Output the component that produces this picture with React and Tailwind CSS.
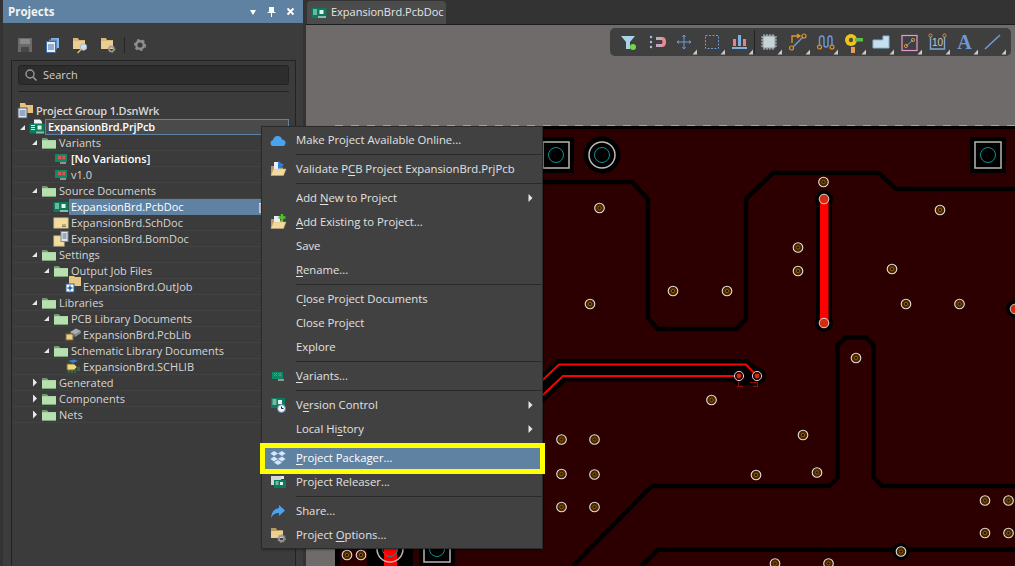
import React from "react";

const FONT = "font-['Open_Sans','Noto_Sans',sans-serif]";

const Folder = () => (
  <svg width="16" height="14" viewBox="0 0 16 14" className="block">
    <path d="M1 2.5 L6 2.5 L7 4 L15 4 L15 13 L1 13 Z" fill="#a9d6a4" />
    <path d="M1 2.5 L6 2.5 L7 4 L1 4 Z" fill="#6f9f6c" />
    <path d="M1 5 H15 V13 H1 Z" fill="#b8dfb0" />
    <path d="M1 12 H15 V13 H1 Z" fill="#79aa75" />
  </svg>
);

const Board = ({ x = 1, y = 3, s = 1 }) => (
  <g transform={`translate(${x} ${y}) scale(${s})`}>
    <rect width="15" height="10" fill="#0c7a5c" />
    <rect x="1.5" y="1.5" width="4" height="1" fill="#cfeee2" />
    <rect x="1.5" y="3.5" width="4" height="1" fill="#cfeee2" />
    <rect x="1.5" y="5.5" width="4" height="1" fill="#cfeee2" />
    <rect x="8" y="2" width="4" height="4" fill="#dff5ec" />
    <rect x="7" y="8" width="1" height="2" fill="#fff" />
    <rect x="9" y="8" width="1" height="2" fill="#fff" />
    <rect x="11" y="8" width="1" height="2" fill="#fff" />
    <rect x="13" y="8" width="1" height="2" fill="#fff" />
  </g>
);

const Svg16 = ({ children }) => (
  <svg width="16" height="16" viewBox="0 0 16 16" className="block">{children}</svg>
);

const PcbIcon = () => <Svg16><Board x={0.5} y={3} /></Svg16>;

const VariantIcon = () => (
  <Svg16>
    <rect x="2" y="3" width="12" height="8" fill="#0c8a66" />
    <path d="M5 5 L8 8 M8 5 L5 8 M9.5 5 L12 8 M12 5 L9.5 8" stroke="#e85a5a" strokeWidth="1.2" />
    <path d="M8 11 V13 M10 11 V13 M12 11 V13" stroke="#dfeee8" strokeWidth="1" />
  </Svg16>
);

const PrjIcon = () => (
  <Svg16>
    <path d="M5 0.5 H11 L13 2.5 V6 H5 Z" fill="#f1f1f1" />
    <Board x={0.5} y={4.5} />
  </Svg16>
);

const SchIcon = () => (
  <Svg16>
    <rect x="1" y="3" width="14" height="10" fill="#f3dc9a" stroke="#d8c9a0" />
    <path d="M9 10 H13 M9 11.5 H13" stroke="#8a7a50" />
  </Svg16>
);

const BomIcon = () => (
  <Svg16>
    <rect x="1" y="5" width="10" height="10" fill="#f3dc9a" stroke="#d8c9a0" />
    <rect x="8" y="0.5" width="7" height="10" fill="#dfe6f2" stroke="#7b8798" />
    <path d="M9.5 3 H13.5 M9.5 5 H13.5 M9.5 7 H13.5" stroke="#5f6b80" />
  </Svg16>
);

const OutJobIcon = () => (
  <svg width="18" height="16" viewBox="0 0 18 16" className="block overflow-visible">
    <path d="M4 -3 H9 L10 -2 H16 V7 H4 Z" fill="#e7c684" />
    <rect x="1" y="5" width="8" height="8" fill="#fff" stroke="#2c5f9e" />
    <path d="M5 6.5 V11.5 M2.5 9 H7.5" stroke="#1a58a8" strokeWidth="1.4" />
  </svg>
);

const PcbLibIcon = () => (
  <Svg16>
    <path d="M5 5 L11 1.5 L16 4 L10 8 Z" fill="#a9adb3" />
    <path d="M5 5 L10 8 L10 10 L5 7 Z" fill="#6b6f75" />
    <path d="M10 8 L16 4 L16 6 L10 10 Z" fill="#8a8e94" />
    <rect x="1" y="7" width="7" height="6" fill="#eccf86" stroke="#7d6a3a" />
  </Svg16>
);

const SchLibIcon = () => (
  <Svg16>
    <path d="M3 2 L9 0.5 L13 2 L8 4 Z" fill="#3a7fd0" />
    <path d="M2 5 H9 L12 8 L9 11 H2 Z" fill="#efd77e" stroke="#7d6a2a" />
    <path d="M4 11 V14 M7 11 V14 M10 10 V14 M12 9 H15 M12 11 H15" stroke="#3f8f4a" />
  </Svg16>
);

const Arrow = ({ open }) =>
  open ? (
    <svg width="7" height="7" viewBox="0 0 7 7" className="block"><path d="M6 1 V6 H1 Z" fill="#e8e8e8" /></svg>
  ) : (
    <svg width="7" height="9" viewBox="0 0 7 9" className="block"><path d="M2 0.5 L6 4.5 L2 8.5 Z" fill="#e8e8e8" /></svg>
  );

const PAD = ["pl-[5px]", "pl-[17px]", "pl-[29px]", "pl-[41px]"];

const Row = ({ level, arrow, icon, label, bold, selected, focused, tail, noLine }) => (
  <div className={`flex h-4 items-center ${PAD[level]} ${noLine ? "" : "border-b border-[#424242]"}`}>
    <span className="flex w-[12px] justify-center pr-[1px]">{arrow ? <Arrow open={arrow === "open"} /> : null}</span>
    <span className="flex w-[16px] justify-start">{icon}</span>
    <span
      className={`mr-[6px] flex h-4 flex-1 items-center pl-[2px] whitespace-nowrap ${bold ? "font-semibold text-white" : "text-[#d6d6d6]"} ${selected ? "bg-[#5f82a3] text-white" : ""} ${focused ? "border border-[#5f82a3] bg-[#4a4a4a] pl-[1px] tracking-[-0.16px]" : ""}`}
    >
      {label}
      {tail ? <span className="ml-auto pr-[17px]">{tail}</span> : null}
    </span>
  </div>
);

const Tree = () => (
  <div className="mt-[11px] text-[11px] leading-4">
    <div className="flex h-4 items-center pl-[5px]">
      <span className="flex w-[19px] justify-start">
        <svg width="17" height="16" viewBox="0 0 17 16" className="block overflow-visible">
          <path d="M3 0 H8 L9 2 H16 V10 H3 Z" fill="#e7c27a" />
          <rect x="1" y="5" width="9" height="10" fill="#dfe6f2" stroke="#4f5b70" />
          <path d="M2.5 8 H8.5 M2.5 10 H8.5 M2.5 12 H8.5" stroke="#4a6a9a" />
        </svg>
      </span>
      <span className="font-semibold tracking-[-0.2px] text-[#d8d8d8]">Project Group 1.DsnWrk</span>
    </div>
    <Row level={0} arrow="open" icon={<PrjIcon />} label="ExpansionBrd.PrjPcb" bold focused noLine />
    <Row level={1} arrow="open" icon={<Folder />} label="Variants" />
    <Row level={2} icon={<VariantIcon />} label="[No Variations]" bold />
    <Row level={2} icon={<VariantIcon />} label="v1.0" />
    <Row level={1} arrow="open" icon={<Folder />} label="Source Documents" />
    <Row level={2} icon={<PcbIcon />} label="ExpansionBrd.PcbDoc" selected tail="[1]" />
    <Row level={2} icon={<SchIcon />} label="ExpansionBrd.SchDoc" />
    <Row level={2} icon={<BomIcon />} label="ExpansionBrd.BomDoc" />
    <Row level={1} arrow="open" icon={<Folder />} label="Settings" />
    <Row level={2} arrow="open" icon={<Folder />} label="Output Job Files" />
    <Row level={3} icon={<OutJobIcon />} label="ExpansionBrd.OutJob" />
    <Row level={1} arrow="open" icon={<Folder />} label="Libraries" />
    <Row level={2} arrow="open" icon={<Folder />} label="PCB Library Documents" />
    <Row level={3} icon={<PcbLibIcon />} label="ExpansionBrd.PcbLib" />
    <Row level={2} arrow="open" icon={<Folder />} label="Schematic Library Documents" />
    <Row level={3} icon={<SchLibIcon />} label="ExpansionBrd.SCHLIB" />
    <Row level={1} arrow="closed" icon={<Folder />} label="Generated" />
    <Row level={1} arrow="closed" icon={<Folder />} label="Components" />
    <Row level={1} arrow="closed" icon={<Folder />} label="Nets" />
  </div>
);

const Gear = ({ x, y, r, c = "#8a8a8a" }) => (
  <g>
    <circle cx={x} cy={y} r={r} fill="none" stroke={c} strokeWidth={r * 0.62} />
    <circle cx={x} cy={y} r={r * 1.4} fill="none" stroke={c} strokeWidth={r * 0.4} strokeDasharray={`${r * 0.7} ${r * 0.7}`} />
  </g>
);

const PanelTools = () => (
  <div className="flex h-[37px] items-center pl-[6px] pt-[7px]">
    <svg width="16" height="16" viewBox="0 0 16 16" className="block">
      <path d="M1 1 H15 V15 H1 Z" fill="#6a6a6a" />
      <rect x="3" y="2" width="10" height="5" fill="#8a8a8a" />
      <rect x="4" y="10" width="8" height="5" fill="#474747" />
    </svg>
    <svg width="16" height="16" viewBox="0 0 16 16" className="ml-[12px] block">
      <rect x="6" y="1" width="8" height="10" fill="#8db4dc" />
      <rect x="4" y="2.5" width="8" height="10" fill="#5b8ec4" />
      <rect x="1.5" y="4.5" width="9" height="11" fill="#e8eef6" stroke="#3f6ea6" />
      <path d="M3 8 H9 M3 10 H9 M3 12 H9" stroke="#3f6ea6" />
    </svg>
    <svg width="17" height="17" viewBox="0 0 17 17" className="ml-[11px] block">
      <path d="M1 1 H6 L7 3 H13 V12 H1 Z" fill="#d8b878" />
      <path d="M1 4 H13 V12 H1 Z" fill="#eccf90" />
      <circle cx="11.5" cy="10" r="3.2" fill="#cfdff0" stroke="#a8b8c8" />
      <path d="M9 12.5 L5.5 16" stroke="#d8b878" strokeWidth="1.6" />
    </svg>
    <svg width="17" height="17" viewBox="0 0 17 17" className="ml-[11px] block">
      <path d="M1 1 H6 L7 3 H13 V12 H1 Z" fill="#d8b878" />
      <path d="M1 4 H13 V12 H1 Z" fill="#eccf90" />
      <Gear x={11.5} y={12} r={2.4} c="#9a9a9a" />
    </svg>
    <span className="ml-[7px] h-[16px] w-px bg-[#262626]" />
    <svg width="16" height="16" viewBox="0 0 16 16" className="ml-[7px] block">
      <Gear x={8} y={8} r={3.8} c="#8f8f8f" />
    </svg>
  </div>
);

const LeftPanel = () => (
  <div className="flex h-full w-[306px] flex-col bg-[#333333] px-[3px]">
    <div className="flex h-[23px] items-center bg-[#5f82a3] pl-[5px] pr-[8px] text-[11.5px] font-bold text-[#f2f2f2]">
      <span>Projects</span>
      <svg width="8" height="8" viewBox="0 0 8 8" className="ml-auto block"><path d="M1 2 H7 L4 7 Z" fill="#fff" /></svg>
      <svg width="9" height="11" viewBox="0 0 9 11" className="ml-[10px] block"><path d="M2 1 H7 V6 H8.5 V7 H5 V11 H4 V7 H0.5 V6 H2 Z" fill="#fff" /></svg>
      <svg width="9" height="9" viewBox="0 0 9 9" className="ml-[10px] block"><path d="M1.5 1.5 L7.5 7.5 M7.5 1.5 L1.5 7.5" stroke="#fff" strokeWidth="1.8" /></svg>
    </div>
    <div className="flex min-h-0 flex-1 flex-col bg-[#3c3c3c] pl-[8px] pr-[7px]">
      <PanelTools />
      <div className="flex-1 border-x border-t border-[#232323] bg-[#3b3b3b]">
        <div className="mx-[6px] mt-[4px] flex h-[20px] items-center rounded-[3px] border border-[#232323] bg-[#2d2d2d] pl-[5px] text-[11px] text-[#cfcfcf]">
          <svg width="14" height="14" viewBox="0 0 14 14" className="block">
            <circle cx="6" cy="6" r="4" fill="none" stroke="#9a9a9a" strokeWidth="1.4" />
            <path d="M9 9 L12.5 12.5" stroke="#9a9a9a" strokeWidth="1.6" />
          </svg>
          <span className="ml-[5px]">Search</span>
        </div>
        <div className="mx-[6px] mt-[6px] border-t border-[#232323]" />
        <Tree />
      </div>
    </div>
  </div>
);

const Corner = () => <path d="M22.5 26.5 L27 26.5 L27 21.5 Z" fill="#c9c9c9" />;

const Tool = ({ children, corner = true }) => (
  <svg width="28" height="28" viewBox="0 0 28 28" className="block flex-none">
    {children}
    {corner ? <Corner /> : null}
  </svg>
);

const TopTools = () => (
  <div className="absolute left-[304px] top-[3px] flex h-[28px] w-[401px] items-center rounded-[5px] bg-[#3f3f3f] pl-[4px]">
    <Tool corner={false}>
      <path d="M7 8 H21 L16 14 V21 H12 V14 Z" fill="#a9d3e6" />
      <circle cx="19" cy="19" r="3" fill="#72d944" />
    </Tool>
    <Tool corner={false}>
      <path d="M14 9 H20 Q24 9 24 14 Q24 19 20 19 H14 V16 H20 Q21 14 20 12 H14 Z" fill="#e88a92" />
      <path d="M14 12 H20 V9 H14 Z M14 19 H20 V16 H14 Z" fill="#9fc2e8" opacity="0.5" />
      <circle cx="9" cy="9" r="1.2" fill="#9fc2e8" />
      <circle cx="9" cy="14" r="1.2" fill="#9fc2e8" />
      <circle cx="9" cy="19" r="1.2" fill="#9fc2e8" />
    </Tool>
    <Tool>
      <path d="M14 7 V21 M7 14 H21 M14 7 L12.5 9 M14 7 L15.5 9 M14 21 L12.5 19 M14 21 L15.5 19 M7 14 L9 12.5 M7 14 L9 15.5 M21 14 L19 12.5 M21 14 L19 15.5" stroke="#6f9ad6" fill="none" />
    </Tool>
    <Tool>
      <rect x="7.5" y="7.5" width="13" height="13" fill="none" stroke="#6f9ad6" strokeDasharray="2 1.5" />
    </Tool>
    <Tool>
      <rect x="7" y="11" width="3" height="7" fill="#e8808a" />
      <rect x="12" y="7" width="3" height="11" fill="#7fb0e0" />
      <rect x="17" y="11" width="3" height="7" fill="#e8808a" />
      <rect x="6" y="19" width="15" height="2" fill="#7fb0e0" />
    </Tool>
    <span className="h-[24px] w-0 border-l border-[#222222]" />
    <Tool>
      <rect x="8" y="8" width="12" height="12" rx="1" fill="#c6d2d6" stroke="#90a0a8" />
      <path d="M9 6 V8 M12 6 V8 M15 6 V8 M18 6 V8 M9 20 V22 M12 20 V22 M15 20 V22 M18 20 V22 M6 9 H8 M6 12 H8 M6 15 H8 M6 18 H8 M20 9 H22 M20 12 H22 M20 15 H22 M20 18 H22" stroke="#b8c6ca" />
    </Tool>
    <Tool>
      <path d="M9 15 V8 H16 M14 6 L17 8 L14 10" fill="none" stroke="#e09a2a" strokeWidth="1.3" />
      <path d="M10 19 L20 9" stroke="#6f9ad6" strokeWidth="1.5" />
      <circle cx="8.5" cy="20" r="2" fill="none" stroke="#d8962a" strokeWidth="1.2" />
      <circle cx="21" cy="8" r="2" fill="none" stroke="#d8962a" strokeWidth="1.2" />
    </Tool>
    <Tool>
      <path d="M8.5 18 V11 Q8.5 8 11 8 Q13 8 13 11 V17 Q13 19 15 19 Q17 19 17 17 V11 Q17 8 19 8 Q21 8 21 11 V18" fill="none" stroke="#6f9ad6" strokeWidth="1.4" />
      <circle cx="8.5" cy="19" r="2" fill="none" stroke="#d8962a" strokeWidth="1.2" />
      <circle cx="21" cy="19" r="2" fill="none" stroke="#d8962a" strokeWidth="1.2" />
    </Tool>
    <Tool>
      <rect x="12" y="19" width="4" height="6" fill="#e8a050" />
      <circle cx="12" cy="12" r="6" fill="#f0c419" />
      <circle cx="12" cy="12" r="2.2" fill="#4a4a4a" />
      <rect x="16" y="10" width="8" height="3.5" fill="#58c04a" />
    </Tool>
    <Tool>
      <path d="M6 12 H16 V8 H22 V20 H6 Z" fill="#c6e0f0" stroke="#8fb6d2" />
    </Tool>
    <Tool>
      <rect x="7" y="7.5" width="15" height="15" fill="none" stroke="#e69ad0" strokeWidth="1.2" />
      <path d="M11 18 L18 12" stroke="#6f9ad6" />
      <circle cx="11" cy="18" r="1.6" fill="none" stroke="#d8962a" />
      <circle cx="18" cy="12" r="1.6" fill="none" stroke="#d8962a" />
    </Tool>
    <Tool>
      <path d="M7.5 9 V21 H21.5 V9" fill="none" stroke="#7fa8d0" strokeWidth="1.4" />
      <circle cx="7.5" cy="7.5" r="1.6" fill="none" stroke="#d8962a" />
      <circle cx="21.5" cy="7.5" r="1.6" fill="none" stroke="#d8962a" />
      <text x="14.5" y="18" textAnchor="middle" fontSize="10" fill="#c9c9c9" fontFamily="Liberation Sans">10</text>
    </Tool>
    <Tool>
      <text x="13.5" y="21" textAnchor="middle" fontSize="20" fontWeight="700" fill="#6f9ad6" fontFamily="Liberation Serif">A</text>
    </Tool>
    <Tool>
      <path d="M6 21 L21 7" stroke="#6f9ad6" strokeWidth="1.6" />
    </Tool>
  </div>
);

const Via = ({ x, y, halo }) => (
  <g>
    {halo ? <circle cx={x} cy={y} r="8.5" fill="#000" /> : null}
    <circle cx={x} cy={y} r="4.8" fill="#4a2600" stroke="#e4e0e0" strokeWidth="1.1" />
    <circle cx={x} cy={y} r="1.7" fill="#2a1400" stroke="#9a600c" strokeWidth="0.9" />
  </g>
);

const RedVia = ({ x, y, halo = 9 }) => (
  <g>
    {halo ? <circle cx={x} cy={y} r={halo} fill="#000" /> : null}
    <circle cx={x} cy={y} r="4.8" fill="#d42a10" stroke="#d8d4d4" strokeWidth="1" />
  </g>
);

const SquarePad = ({ x, y }) => (
  <g>
    <rect x={x - 18} y={y - 18} width="36" height="36" fill="#000" />
    <rect x={x - 13} y={y - 13} width="26" height="26" fill="#000" stroke="#b9b5b5" strokeWidth="1.5" />
    <circle cx={x} cy={y} r="7.5" fill="none" stroke="#0f8f8f" strokeWidth="1" />
  </g>
);

const vias = [
  [823.5, 182], [599.5, 208], [798, 247.5], [798, 271], [940, 210], [892, 269], [673, 291], [727, 291], [590, 304],
  [906, 304], [959.5, 304], [856, 358], [711.5, 400], [803, 435], [817, 472.5], [756, 475], [561.5, 439.5], [594.5, 439.5],
  [561.5, 474], [594.5, 474.5], [561.5, 507], [594.5, 507], [985, 500.5], [1008.5, 500.5], [985, 533], [1008.5, 533],
  [775, 563.5], [828.5, 563.5], [347, 555], [361, 555],
];

const Pcb = () => (
  <svg width="709" height="541" viewBox="306 25 709 541" className="block">
    <rect x="306" y="25" width="709" height="541" fill="#6f6b6a" />
    <path d="M335 125.5 H1015" stroke="#a8a5a4" strokeDasharray="8 8" />
    <rect x="335" y="126" width="680" height="440" fill="#000" />
    <rect x="340" y="129" width="675" height="437" fill="#2c0000" />

    <g fill="none" stroke="#000" strokeWidth="4.4">
      <path d="M520 182 H632 L648 199 V318 L658 329 H737 L746 319 V199 L773 173 H879 L896 189 H1015" />
      <path d="M651.7 486 H829 L837.5 478 V345 L846 337.5 H866 L873.5 345 V477 L882 486 H1015" />
      <path d="M651.7 486 L573 566" />
      <path d="M1015 549.5 H658.5 L641.5 566" />
    </g>

    <path d="M816 199 H832 V323 H816 Z" fill="#000" />
    <circle cx="824" cy="199" r="9" fill="#000" />
    <circle cx="824" cy="323" r="9" fill="#000" />
    <rect x="820" y="199" width="8.5" height="124" fill="#ff0000" />
    <RedVia x={824} y={199} halo={0} />
    <RedVia x={824} y={323} halo={0} />

    <circle cx="1015" cy="309" r="9" fill="#000" />
    <circle cx="1015" cy="309" r="4.8" fill="#d42a10" stroke="#cfcaca" />

    <path d="M520 396 L557 359 H747 L757 367 L757 385 H739 V381.5 H566 L520 424 Z" fill="#000" />
    <circle cx="739" cy="376" r="9" fill="#000" />
    <circle cx="757" cy="376" r="9" fill="#000" />
    <path d="M530 392 L559 364.5 H746 L757 376" fill="none" stroke="#ff0000" strokeWidth="2" />
    <path d="M530 407 L563 376 H739" fill="none" stroke="#ff0000" strokeWidth="2" />
    <circle cx="739" cy="376" r="4.6" fill="#300000" stroke="#d8d4d4" />
    <circle cx="757" cy="376" r="4.6" fill="#300000" stroke="#d8d4d4" />
    <circle cx="739" cy="376" r="2.4" fill="#d42a10" />
    <circle cx="757" cy="376" r="2.4" fill="#d42a10" />
    <path d="M738.5 381.5 V386 M737 386.5 H743 M750 382.5 H757.5 M757.5 382 V386.5 M753 386.5 H758" stroke="#8f0f0f" fill="none" />

    <SquarePad x={556} y={155} />
    <circle cx="602" cy="155" r="18.5" fill="#000" />
    <circle cx="602" cy="155" r="13" fill="none" stroke="#bdb9b9" strokeWidth="1.5" />
    <circle cx="602" cy="155" r="7.5" fill="none" stroke="#0f8f8f" />
    <SquarePad x={988} y={155} />

    <rect x="367" y="530" width="46" height="36" fill="#000" />
    <rect x="384" y="530" width="13" height="36" fill="#ff0000" />
    <circle cx="390" cy="549" r="13" fill="none" stroke="#bdb9b9" strokeWidth="1.5" />
    <circle cx="390" cy="549" r="7.5" fill="none" stroke="#0f8f8f" />
    <SquarePad x={437} y={549} />

    {vias.map(([x, y], i) => <Via key={i} x={x} y={y} />)}
    <Via x={901} y={551.5} halo />
  </svg>
);

const Sep = () => <div className="my-[2px] ml-[34px] h-px border-t border-[#2a2a2a]" />;

const U = ({ children }) => <span className="underline underline-offset-2">{children}</span>;

const Item = ({ icon, children, sub, hot }) => (
  <div className={`relative flex h-[24px] items-center ${hot ? "bg-[#5f82a3] text-white" : ""}`}>
    <span className="flex w-[34px] flex-none justify-center pr-[2px]">{icon}</span>
    <span className="whitespace-pre">{children}</span>
    {sub ? (
      <svg width="5" height="8" viewBox="0 0 5 8" className="ml-auto mr-[9px] block"><path d="M0.5 0 L4.5 4 L0.5 8 Z" fill="#e8e8e8" /></svg>
    ) : null}
    {hot ? <span className="absolute -left-[2px] -right-[3px] -top-[3px] -bottom-[4px] border-[5px] border-[#ffff00]" /> : null}
  </div>
);

const I18 = ({ children }) => <svg width="18" height="18" viewBox="0 0 18 18" className="block">{children}</svg>;

const FolderOpen = () => (
  <>
    <path d="M2 6 H7 L8 7.5 H14 V15 H2 Z" fill="#b89a60" />
    <path d="M2 15.5 L4.5 9 H17 L14.5 15.5 Z" fill="#f2d9a0" stroke="#cbb27a" strokeWidth="0.5" />
  </>
);

const ContextMenu = () => (
  <div className="absolute left-[261px] top-[126px] w-[282px] border border-[#2a2a2a] bg-[#414141] py-[1px] text-[11.3px] leading-4 text-[#e2e2e2] shadow-[1px_1px_2px_rgba(0,0,0,0.35)]">
    <Item icon={<I18><path d="M2 14 Q0.5 10 4 9 Q5 4.5 9.5 5 Q12.5 5.5 13 8.5 Q17 9 16.5 12.5 Q16 15 14 15 H4 Q2.5 15 2 14 Z" fill="#4aa3ef" /></I18>}>Make Project Available Online...</Item>
    <Sep />
    <Item icon={<I18><FolderOpen /><rect x="5" y="2" width="5" height="7" fill="#e8eef6" /><path d="M9 1 L15 5 L9 9 Z" fill="#2f80e0" /></I18>}>Validate P<U>C</U>B Project ExpansionBrd.PrjPcb</Item>
    <Sep />
    <Item sub>Add <U>N</U>ew to Project</Item>
    <Item icon={<I18><FolderOpen /><rect x="5" y="3" width="6" height="6" fill="#e8eef6" /><path d="M13 1 V8 M9.5 4.5 H16.5" stroke="#4fc22c" strokeWidth="2.4" /></I18>}><U>A</U>dd Existing to Project...</Item>
    <Item>Save</Item>
    <Item><U>R</U>ename...</Item>
    <Sep />
    <Item>C<U>l</U>ose Project Documents</Item>
    <Item>Close Project</Item>
    <Item>Explore</Item>
    <Sep />
    <Item icon={<I18><rect x="3" y="5" width="11" height="7" fill="#0c8a66" /><path d="M5 6 L8 9 M8 6 L5 9 M9.5 6 L12 9 M12 6 L9.5 9" stroke="#e85a5a" /><path d="M10 12 V14 M12 12 V14 M14 12 V14" stroke="#dfeee8" /></I18>}><U>V</U>ariants...</Item>
    <Sep />
    <Item sub icon={<I18><rect x="2" y="2" width="14" height="10" fill="#0c7a5c" /><rect x="3.5" y="3.5" width="4" height="1" fill="#dff5ec" /><rect x="3.5" y="5.5" width="4" height="1" fill="#dff5ec" /><rect x="3.5" y="7.5" width="4" height="1" fill="#dff5ec" /><rect x="9" y="4" width="4" height="4" fill="#dff5ec" /><circle cx="12.5" cy="12.5" r="4" fill="#f4f4f4" stroke="#4f7fb0" /><path d="M12.5 10.5 V12.5 H14.5" stroke="#223" fill="none" /></I18>}>V<U>e</U>rsion Control</Item>
    <Item sub>Local Hi<U>s</U>tory</Item>
    <Sep />
    <Item hot icon={<I18><g fill="#d5e6fb"><path d="M5 2 L9 4.5 L5 7 L1.5 4.5 Z" /><path d="M13 2 L16.5 4.5 L13 7 L9 4.5 Z" /><path d="M5 7.5 L9 10 L5 12.5 L1.5 10 Z" /><path d="M13 7.5 L16.5 10 L13 12.5 L9 10 Z" /><path d="M9 11 L13 13.5 L9 16 L5 13.5 Z" /></g></I18>}><U>P</U>roject Packager...</Item>
    <Item icon={<I18><path d="M2 3 H15 V6 H2 Z" fill="#e8e8e8" /><rect x="2" y="3" width="10" height="9" fill="#d6d6d6" /><rect x="5" y="7" width="12" height="8" fill="#0c7a5c" /><rect x="6.5" y="8.5" width="3" height="1" fill="#dff5ec" /><rect x="6.5" y="10.5" width="3" height="1" fill="#dff5ec" /><rect x="11" y="9" width="3" height="3" fill="#dff5ec" /></I18>}>Project Releaser...</Item>
    <Sep />
    <Item icon={<I18><path d="M10 3 L16 8.5 L10 14 V11 Q5 10.5 2 16 Q2.5 7 10 6 Z" fill="#4aa3ef" /></I18>}>Share...</Item>
    <Item icon={<I18><path d="M2 2 H7 L8 4 H14 V12 H2 Z" fill="#b89a60" /><path d="M2 5 H14 V12 H2 Z" fill="#ecd093" /><circle cx="12.5" cy="12.5" r="2.6" fill="none" stroke="#9a9a9a" strokeWidth="1.6" /><circle cx="12.5" cy="12.5" r="4" fill="none" stroke="#9a9a9a" strokeWidth="1" strokeDasharray="1.5 1.5" /></I18>}>Project <U>O</U>ptions...</Item>
  </div>
);

export default function App() {
  return (
    <div className={`relative flex h-[566px] w-[1015px] overflow-hidden bg-[#333333] ${FONT}`}>
      <LeftPanel />
      <div className="flex h-full flex-1 flex-col">
        <div className="flex h-[25px] flex-none items-end border-b border-[#1e1e1e] bg-[#333333] pl-px">
          <div className="flex h-[23px] w-[139px] items-center rounded-t-[4px] bg-[#4b4b4b] pl-[4px] text-[11px] text-[#e6e6e6]">
            <svg width="16" height="14" viewBox="0 0 16 14" className="block"><Board x={0.5} y={2} /></svg>
            <span className="ml-[4px]">ExpansionBrd.PcbDoc</span>
          </div>
        </div>
        <div className="relative flex-1">
          <Pcb />
          <TopTools />
        </div>
      </div>
      <ContextMenu />
    </div>
  );
}
